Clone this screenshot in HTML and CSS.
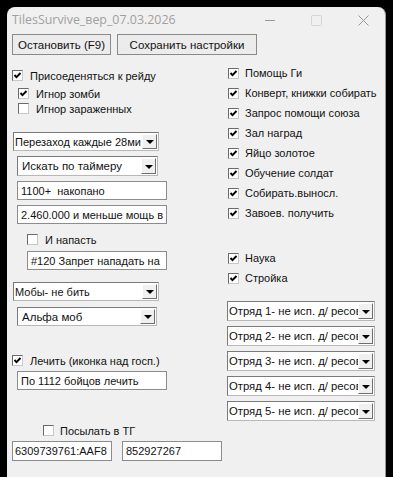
FILE: index.html
```html
<!DOCTYPE html>
<html>
<head>
<meta charset="utf-8">
<link rel="stylesheet" href="styles.css">
</head>
<body>
<div class="window">
  <div class="titlebar">
    <span class="title">TilesSurvive_вер_07.03.2026</span>
    <div class="caption">
      <svg class="cap-min" width="10" height="10" viewBox="0 0 10 10"><line x1="0" y1="5.5" x2="10" y2="5.5" stroke="#9a9a9a" stroke-width="1"/></svg>
      <svg class="cap-max" width="11" height="11" viewBox="0 0 11 11"><rect x="0.5" y="0.5" width="10" height="10" rx="1" fill="none" stroke="#d4d4d4" stroke-width="1"/></svg>
      <svg class="cap-close" width="11" height="11" viewBox="0 0 11 11"><path d="M0.5 0.5 L10.5 10.5 M10.5 0.5 L0.5 10.5" stroke="#9a9a9a" stroke-width="1"/></svg>
    </div>
  </div>
  <div class="toolbar">
    <div class="btn btn-stop">Остановить (F9)</div>
    <div class="btn btn-save">Сохранить настройки</div>
  </div>
  <div class="content">
    <div class="col-left">
      <div class="cb r1"><span class="box on"><svg viewBox="0 0 9 9"><polyline points="1.5,4 3.5,6.2 7.5,2" /></svg></span><span class="lbl">Присоеденяться к рейду</span></div>
      <div class="cb r2"><span class="box on"><svg viewBox="0 0 9 9"><polyline points="1.5,4 3.5,6.2 7.5,2" /></svg></span><span class="lbl">Игнор зомби</span></div>
      <div class="cb r3"><span class="box"></span><span class="lbl">Игнор зараженных</span></div>
      <div class="sel s1"><span class="val">Перезаход каждые 28ми</span><span class="arrow"><i></i></span></div>
      <div class="sel s2"><span class="val">Искать по таймеру</span><span class="arrow"><i></i></span></div>
      <div class="inp i1">1100+  накопано</div>
      <div class="inp i2">2.460.000 и меньше мощь в</div>
      <div class="cb r4"><span class="box"></span><span class="lbl">И напасть</span></div>
      <div class="inp i3">#120 Запрет нападать на</div>
      <div class="sel s3"><span class="val">Мобы- не бить</span><span class="arrow"><i></i></span></div>
      <div class="sel s4"><span class="val">Альфа моб</span><span class="arrow"><i></i></span></div>
      <div class="cb r5"><span class="box on"><svg viewBox="0 0 9 9"><polyline points="1.5,4 3.5,6.2 7.5,2" /></svg></span><span class="lbl">Лечить (иконка над госп.)</span></div>
      <div class="inp i4">По 1112 бойцов лечить</div>
      <div class="cb r6"><span class="box"></span><span class="lbl">Посылать в ТГ</span></div>
      <div class="tg-row">
        <div class="inp i5">6309739761:AAF8</div>
        <div class="inp i6">852927267</div>
      </div>
    </div>
    <div class="col-right">
      <div class="rlist">
        <div class="cbr"><span class="box on"><svg viewBox="0 0 9 9"><polyline points="1.5,4 3.5,6.2 7.5,2" /></svg></span><span class="lbl">Помощь Ги</span></div>
        <div class="cbr"><span class="box on"><svg viewBox="0 0 9 9"><polyline points="1.5,4 3.5,6.2 7.5,2" /></svg></span><span class="lbl">Конверт, книжки собирать</span></div>
        <div class="cbr"><span class="box on"><svg viewBox="0 0 9 9"><polyline points="1.5,4 3.5,6.2 7.5,2" /></svg></span><span class="lbl">Запрос помощи союза</span></div>
        <div class="cbr"><span class="box on"><svg viewBox="0 0 9 9"><polyline points="1.5,4 3.5,6.2 7.5,2" /></svg></span><span class="lbl">Зал наград</span></div>
        <div class="cbr"><span class="box on"><svg viewBox="0 0 9 9"><polyline points="1.5,4 3.5,6.2 7.5,2" /></svg></span><span class="lbl">Яйцо золотое</span></div>
        <div class="cbr"><span class="box on"><svg viewBox="0 0 9 9"><polyline points="1.5,4 3.5,6.2 7.5,2" /></svg></span><span class="lbl">Обучение солдат</span></div>
        <div class="cbr"><span class="box on"><svg viewBox="0 0 9 9"><polyline points="1.5,4 3.5,6.2 7.5,2" /></svg></span><span class="lbl">Собирать.выносл.</span></div>
        <div class="cbr"><span class="box on"><svg viewBox="0 0 9 9"><polyline points="1.5,4 3.5,6.2 7.5,2" /></svg></span><span class="lbl">Завоев. получить</span></div>
      </div>
      <div class="rlist rlist2">
        <div class="cbr"><span class="box on"><svg viewBox="0 0 9 9"><polyline points="1.5,4 3.5,6.2 7.5,2" /></svg></span><span class="lbl">Наука</span></div>
        <div class="cbr"><span class="box on"><svg viewBox="0 0 9 9"><polyline points="1.5,4 3.5,6.2 7.5,2" /></svg></span><span class="lbl">Стройка</span></div>
      </div>
      <div class="squads">
        <div class="sel sq"><span class="val">Отряд 1- не исп. д/ ресов</span><span class="arrow"><i></i></span></div>
        <div class="sel sq"><span class="val">Отряд 2- не исп. д/ ресов</span><span class="arrow"><i></i></span></div>
        <div class="sel sq"><span class="val">Отряд 3- не исп. д/ ресов</span><span class="arrow"><i></i></span></div>
        <div class="sel sq"><span class="val">Отряд 4- не исп. д/ ресов</span><span class="arrow"><i></i></span></div>
        <div class="sel sq"><span class="val">Отряд 5- не исп. д/ ресов</span><span class="arrow"><i></i></span></div>
      </div>
    </div>
  </div>
</div>
</body>
</html>
```

FILE: styles.css
```css
html, body {
  margin: 0;
  padding: 0;
  background: #000;
  overflow: hidden;
}
body {
  width: 393px;
  height: 477px;
}
.window {
  margin: 7px 0 0 7px;
  width: 379px;
  height: 480px;
  background: #f0f0f0;
  border-radius: 8px 8px 0 0;
  border-right: 1px solid #9a9a9a;
  box-sizing: border-box;
  font-family: "Liberation Sans", Arial, sans-serif;
  font-size: 11px;
  color: #111;
}
.titlebar {
  height: 24px;
  display: flex;
  align-items: center;
  padding-left: 5px;
}
.title {
  font-family: "Open Sans", "Noto Sans", sans-serif;
  font-size: 12.4px;
  color: #a0a0a0;
  margin-top: 1px;
}
.caption {
  margin-left: auto;
  display: flex;
  align-items: center;
  margin-top: 2px;
}
.cap-min { margin-right: 36px; }
.cap-max { margin-right: 36px; }
.cap-close { margin-right: 16px; }

.toolbar {
  display: flex;
  gap: 6px;
  padding-left: 5px;
  margin-top: 3px;
}
.btn {
  height: 21px;
  box-sizing: border-box;
  border: 1px solid #8a8a8a;
  background: #ececec;
  display: flex;
  align-items: center;
  justify-content: center;
  font-size: 11.5px;
}
.btn-stop { width: 99px; }
.btn-save { width: 140px; }

.content {
  display: flex;
  padding-left: 5px;
}
.col-left {
  width: 215px;
  display: flex;
  flex-direction: column;
  align-items: flex-start;
}
.col-right {
  display: flex;
  flex-direction: column;
  align-items: flex-start;
}

/* checkbox */
.cb, .cbr {
  display: flex;
  align-items: center;
  height: 13px;
}
.cbr { height: 20px; margin-left: 1px; }
.box {
  width: 11px;
  height: 11px;
  box-sizing: border-box;
  background: #fff;
  border: 1px solid;
  border-color: #6a6a6a #c8c8c8 #c8c8c8 #6a6a6a;
  display: flex;
  align-items: center;
  justify-content: center;
  flex: none;
}
.box svg {
  width: 9px;
  height: 9px;
}
.box polyline {
  fill: none;
  stroke: #000;
  stroke-width: 1.9;
}
.lbl {
  margin-left: 7px;
  white-space: nowrap;
}
.cbr .lbl { margin-left: 6px; }
.r1 { margin-top: 14px; }
.r2 { margin-top: 5px; margin-left: 6px; }
.r3 { margin-top: 2px; margin-left: 6px; }
.r4 { margin-top: 9px; margin-left: 15px; }
.r5 { margin-top: 28px; }
.r6 { margin-top: 34px; margin-left: 31px; }
.r6 .lbl { margin-left: 6px; }

/* select */
.sel {
  height: 20px;
  box-sizing: border-box;
  background: #fff;
  border: 1px solid;
  border-color: #7a7a7a #b8b8b8 #b8b8b8 #7a7a7a;
  display: flex;
  align-items: stretch;
  overflow: hidden;
}
.sel .val {
  flex: 1;
  min-width: 0;
  overflow: hidden;
  white-space: nowrap;
  padding-left: 2px;
  display: flex;
  align-items: center;
}
.arrow {
  width: 15px;
  flex: none;
  background: #f0f0f0;
  box-sizing: border-box;
  border: 1px solid;
  border-color: #ffffff #6e6e6e #6e6e6e #ffffff;
  margin: 1px 1px 1px 0;
  display: flex;
  align-items: center;
  justify-content: center;
}
.arrow i {
  width: 0;
  height: 0;
  border-left: 4px solid transparent;
  border-right: 4px solid transparent;
  border-top: 4px solid #000;
  margin-top: 1px;
}
.s1 { margin-top: 17px; margin-left: 1px; width: 146px; height: 19px; }
.s2 { margin-top: 5px; margin-left: 5px; width: 141px; }
.s3 { margin-top: 12px; margin-left: 1px; width: 146px; height: 19px; }
.s4 { margin-top: 6px; margin-left: 5px; width: 140px; height: 19px; }
.s1 .val, .s3 .val { padding-left: 1px; }
.s2 .val, .s4 .val { padding-left: 4px; font-size: 11.5px; }

/* input */
.inp {
  height: 19px;
  box-sizing: border-box;
  background: #fff;
  border: 1px solid #8c8c8c;
  padding-left: 3px;
  display: flex;
  align-items: center;
  white-space: pre;
  overflow: hidden;
  font-size: 11px;
}
.i1 { margin-top: 5px; margin-left: 5px; width: 150px; }
.i2 { margin-top: 5px; margin-left: 5px; width: 150px; }
.i3 { margin-top: 5px; margin-left: 15px; width: 140px; }
.i4 { margin-top: 4px; margin-left: 5px; width: 150px; }
.tg-row {
  display: flex;
  gap: 10px;
  margin-top: 4px;
}
.i5, .i6 { width: 100px; height: 20px; }
.i5 { padding-left: 2px; }

.rlist { margin-top: 8px; display: flex; flex-direction: column; }
.rlist2 { margin-top: 25px; }
.squads {
  margin-top: 13px;
  display: flex;
  flex-direction: column;
  gap: 5px;
}
.sq { width: 148px; }
.sq .val { padding-left: 1px; font-size: 11.3px; }
```
